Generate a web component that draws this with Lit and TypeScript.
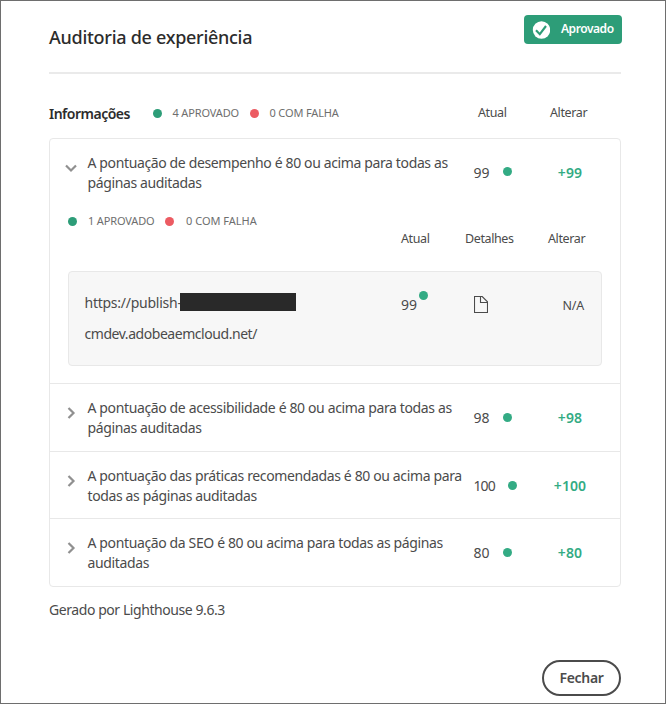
import { LitElement, html, css, svg } from "lit";
import { customElement, property } from "lit/decorators.js";
import { classMap } from "lit/directives/class-map.js";

interface Audit {
  title: string;
  score: number;
  open?: boolean;
}

const audits: Audit[] = [
  { title: "A pontuação de desempenho é 80 ou acima para todas as páginas auditadas", score: 99, open: true },
  { title: "A pontuação de acessibilidade é 80 ou acima para todas as páginas auditadas", score: 98 },
  { title: "A pontuação das práticas recomendadas é 80 ou acima para todas as páginas auditadas", score: 100 },
  { title: "A pontuação da SEO é 80 ou acima para todas as páginas auditadas", score: 80 },
];

@customElement("audit-summary")
class AuditSummary extends LitElement {
  @property({ type: Number }) passed = 0;
  @property({ type: Number }) failed = 0;
  @property({ type: Boolean, reflect: true }) compact = false;

  static styles = css`
    :host {
      display: flex;
      align-items: center;
      height: 16px;
      font-size: 11px;
      line-height: 16px;
      letter-spacing: -0.1px;
      color: #6e6e6e;
      white-space: nowrap;
    }
    .dot {
      width: 9px;
      height: 9px;
      border-radius: 50%;
      background: #2d9d78;
      flex: none;
    }
    .dot.fail {
      background: #ec5b62;
    }
    .label {
      margin-left: 11px;
      width: 77px;
      flex: none;
      letter-spacing: -0.15px;
    }
    .label.last {
      width: auto;
    }
    :host([compact]) .label.last {
      margin-left: 12px;
      letter-spacing: 0;
    }
  `;

  render() {
    return html`
      <span class="dot"></span><span class="label">${this.passed} APROVADO</span>
      <span class="dot fail"></span><span class="label last">${this.failed} COM FALHA</span>
    `;
  }
}

@customElement("audit-row")
class AuditRow extends LitElement {
  @property({ attribute: false }) audit!: Audit;

  static styles = css`
    :host {
      display: block;
    }
    .row {
      display: grid;
      grid-template-columns: 37.5px 386px 66.5px 60px;
      height: 67px;
      box-sizing: border-box;
      padding-top: 14px;
      align-items: start;
    }
    .chevron {
      display: block;
      width: 12px;
      height: 12px;
      margin: 9px 0 0 15px;
      fill: none;
      stroke: #909090;
      stroke-width: 2.2;
    }
    .title {
      line-height: 20px;
      letter-spacing: -0.37px;
    }
    .score {
      display: flex;
      align-items: center;
      height: 38px;
    }
    .dot {
      width: 9px;
      height: 9px;
      margin: 0 0 -1px 13px;
      border-radius: 50%;
      background: #33ab84;
    }
    .open .dot {
      margin-bottom: 1px;
    }
    .full {
      letter-spacing: -0.9px;
    }
    .change {
      line-height: 40px;
      text-align: center;
      font-weight: 600;
      letter-spacing: 0.1px;
      color: #33ab84;
    }
  `;

  render() {
    const { title, score, open } = this.audit;
    return html`
      <div class=${classMap({ row: true, open: !!open })}>
        <svg class="chevron" viewBox="0 0 12 12">
          ${open ? svg`<path d="M1 3.5 6 8.5 11 3.5" />` : svg`<path d="M3.5 1 8.5 6 3.5 11" />`}
        </svg>
        <div class="title">${title}</div>
        <div class="score">
          <span class=${classMap({ full: score === 100 })}>${score}</span><span class="dot"></span>
        </div>
        <div class="change">+${score}</div>
      </div>
    `;
  }
}

@customElement("app-root")
class AppRoot extends LitElement {
  static styles = css`
    :host {
      display: block;
      box-sizing: border-box;
      width: 666px;
      height: 704px;
      border: 1px solid #6e6e6e;
      padding: 14px 44px 0 48px;
      background: #fff;
      color: #4b4b4b;
      font-family: "Noto Sans", "Open Sans", sans-serif;
      font-size: 14px;
      overflow: hidden;
    }
    .header {
      display: flex;
      justify-content: space-between;
      height: 57px;
      width: 573px;
    }
    .heading {
      margin: 9px 0 0;
      font-size: 18px;
      line-height: 26px;
      font-weight: 500;
      letter-spacing: -0.28px;
      color: #2c2c2c;
    }
    .badge {
      display: flex;
      align-items: center;
      box-sizing: border-box;
      width: 98px;
      height: 29px;
      padding-left: 8px;
      border-radius: 4px;
      background: #2d9d78;
      color: #fff;
      font-size: 12px;
      font-weight: 600;
      letter-spacing: -0.45px;
    }
    .check {
      width: 18px;
      height: 18px;
      margin-right: 11px;
    }
    .badge-text {
      padding-bottom: 2px;
    }
    .divider {
      height: 2px;
      width: 572px;
      background: #eaeaea;
    }
    .info {
      display: grid;
      grid-template-columns: 103.5px 325.5px 72px 50px;
      height: 64px;
      width: 572px;
      box-sizing: border-box;
      padding-top: 29px;
    }
    .info-title {
      font-weight: 600;
      font-size: 14px;
      line-height: 20px;
      letter-spacing: -0.5px;
      color: #2c2c2c;
      padding-top: 1px;
    }
    .info-summary {
      margin-top: 2px;
    }
    .col {
      font-size: 12.5px;
      line-height: 18px;
      letter-spacing: -0.38px;
      white-space: nowrap;
    }
    .info .col {
      padding-top: 1px;
    }
    .card {
      box-sizing: border-box;
      width: 572px;
      height: 449px;
      border: 1px solid #e8e8e8;
      border-radius: 4px;
    }
    .item + .item {
      border-top: 1px solid #e8e8e8;
    }
    .item.first {
      height: 244px;
    }
    .item.second {
      height: 67px;
    }
    .item.third {
      height: 66px;
    }
    .sub-summary {
      margin: 7px 0 0 18px;
    }
    .sub-cols {
      display: grid;
      grid-template-columns: 64px 83px 50px;
      padding-left: 351px;
      height: 18px;
      margin-top: 1px;
    }
    .page {
      display: grid;
      grid-template-columns: 316.5px 73px 88.5px 30px;
      box-sizing: border-box;
      width: 534px;
      height: 95px;
      margin: 23px 0 0 18px;
      padding: 15px 0 0 15.5px;
      border: 1px solid #e8e8e8;
      border-radius: 4px;
      background: #f7f7f7;
    }
    .url {
      line-height: 31px;
      letter-spacing: -0.45px;
    }
    .url-line {
      display: flex;
      align-items: center;
      height: 31px;
    }
    .host {
      width: 95.5px;
      letter-spacing: -0.25px;
      white-space: nowrap;
    }
    .redacted {
      width: 116px;
      height: 18px;
      margin-bottom: 1px;
      background: #292929;
    }
    .page-score {
      display: flex;
      line-height: 20px;
      padding-top: 8px;
    }
    .dot {
      width: 9px;
      height: 9px;
      margin: -4px 0 0 2px;
      border-radius: 50%;
      background: #33ab84;
    }
    .doc {
      display: block;
      width: 14px;
      height: 17px;
      margin-top: 9px;
      fill: none;
      stroke: #4b4b4b;
      stroke-width: 1.1;
    }
    .na {
      font-size: 12.5px;
      line-height: 20px;
      padding-top: 9px;
      letter-spacing: -0.2px;
    }
    .generated {
      margin-top: 13px;
      line-height: 20px;
      letter-spacing: -0.43px;
    }
    .footer {
      display: flex;
      justify-content: flex-end;
      width: 572px;
      margin-top: 40px;
    }
    .close {
      box-sizing: border-box;
      width: 79px;
      height: 36px;
      padding: 0 0 2px;
      border: 2px solid #4b4b4b;
      border-radius: 18px;
      background: #fff;
      color: #4b4b4b;
      font: 600 14px "Noto Sans", "Open Sans", sans-serif;
      letter-spacing: -0.3px;
    }
  `;

  private details() {
    return html`
      <audit-summary class="sub-summary" compact .passed=${1} .failed=${0}></audit-summary>
      <div class="sub-cols">
        <span class="col">Atual</span><span class="col">Detalhes</span><span class="col">Alterar</span>
      </div>
      <div class="page">
        <div class="url">
          <div class="url-line"><span class="host">https://publish-</span><span class="redacted"></span></div>
          <div class="url-line">cmdev.adobeaemcloud.net/</div>
        </div>
        <div class="page-score">99<span class="dot"></span></div>
        <svg class="doc" viewBox="0 0 14 17">
          <path d="M.5.5H8.2L13.5 5.8V16.5H.5Z" />
          <path d="M6.5.5V6.5H13.5" />
        </svg>
        <div class="na">N/A</div>
      </div>
    `;
  }

  render() {
    const places = ["first", "second", "third", "fourth"];
    return html`
      <div class="header">
        <h1 class="heading">Auditoria de experiência</h1>
        <div class="badge">
          <svg class="check" viewBox="0 0 18 18">
            <circle cx="9.5" cy="9" r="8.7" fill="#fff" />
            <path d="M4 9.3 7.8 13.2 14 5" fill="none" stroke="#2d9d78" stroke-width="2.1" />
          </svg>
          <span class="badge-text">Aprovado</span>
        </div>
      </div>
      <div class="divider"></div>
      <div class="info">
        <span class="info-title">Informações</span>
        <audit-summary class="info-summary" .passed=${4} .failed=${0}></audit-summary>
        <span class="col">Atual</span>
        <span class="col">Alterar</span>
      </div>
      <div class="card">
        ${audits.map(
          (audit, i) => html`
            <div class="item ${places[i]}">
              <audit-row .audit=${audit}></audit-row>
              ${audit.open ? this.details() : ""}
            </div>
          `
        )}
      </div>
      <div class="generated">Gerado por Lighthouse 9.6.3</div>
      <div class="footer"><button class="close">Fechar</button></div>
    `;
  }
}
